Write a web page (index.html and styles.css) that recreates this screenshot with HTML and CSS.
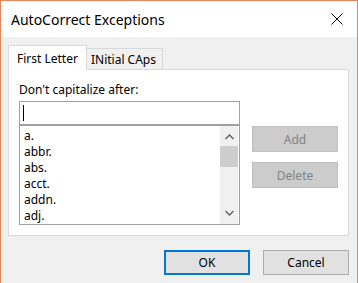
FILE: index.html
```html
<!DOCTYPE html>
<html lang="en">
<head>
  <meta charset="UTF-8" />
  <title>AutoCorrect Exceptions</title>
  <link rel="stylesheet" href="styles.css">
</head>
<body>
  <div class="window">
    <div class="titlebar">
      <span class="title">AutoCorrect Exceptions</span>
      <svg class="close" width="12" height="12" viewBox="0 0 12 12">
        <path d="M0.5 0.5 L11.5 11.5 M11.5 0.5 L0.5 11.5" stroke="#000" stroke-width="1" fill="none"/>
      </svg>
    </div>

    <div class="client">
      <div class="tabs">
        <div class="tab active">First Letter</div>
        <div class="tab">INitial CAps</div>
      </div>

      <div class="panel">
        <div class="label">Don't capitalize after:</div>
        <div class="row">
          <div class="fields">
            <div class="input"><span class="caret"></span></div>
            <div class="list">
              <ul class="items">
                <li>a.</li>
                <li>abbr.</li>
                <li>abs.</li>
                <li>acct.</li>
                <li>addn.</li>
                <li>adj.</li>
              </ul>
              <div class="scrollbar">
                <svg class="arrow" width="9" height="6" viewBox="0 0 9 6">
                  <path d="M0.5 5 L4.5 1 L8.5 5" stroke="#606060" stroke-width="1.4" fill="none"/>
                </svg>
                <div class="thumb"></div>
                <div class="track"></div>
                <svg class="arrow" width="9" height="6" viewBox="0 0 9 6">
                  <path d="M0.5 1 L4.5 5 L8.5 1" stroke="#606060" stroke-width="1.4" fill="none"/>
                </svg>
              </div>
            </div>
          </div>
          <div class="side-buttons">
            <button class="btn" disabled>Add</button>
            <button class="btn" disabled>Delete</button>
          </div>
        </div>
      </div>

      <div class="footer">
        <button class="btn default">OK</button>
        <button class="btn">Cancel</button>
      </div>
    </div>
  </div>
</body>
</html>
```

FILE: styles.css
```css
* { margin: 0; padding: 0; box-sizing: border-box; }
body {
  font-family: 'Noto Sans', 'Open Sans', sans-serif;
  font-size: 12px;
  color: #000;
  background: #f0f0f0;
}

/* Window frame */
.window {
  width: 358px;
  height: 283px;
  border: 1px solid #e8845a;
  border-bottom: none;
  display: flex;
  flex-direction: column;
  background: #f0f0f0;
}
.titlebar {
  height: 36px;
  background: #fff;
  display: flex;
  align-items: center;
  justify-content: space-between;
  padding: 0 14px 0 10px;
}
.title { font-size: 14px; }
.close { display: block; }

/* Client area */
.client {
  flex: 1;
  padding: 8px 8px 0 7px;
}

/* Tabs */
.tabs {
  display: flex;
  align-items: flex-end;
  height: 24px;
}
.tab {
  height: 21px;
  padding: 0 6px 0 4px;
  border: 1px solid #d9d9d9;
  border-bottom: none;
  border-left: none;
  background: #f0f0f0;
  display: flex;
  align-items: center;
}
.tab.active {
  height: 25px;
  margin-bottom: -1px;
  padding: 0 8px;
  border-left: 1px solid #d9d9d9;
  background: #fff;
  position: relative;
  z-index: 1;
}

.panel {
  height: 167px;
  width: 341px;
  border: 1px solid #d9d9d9;
  background: #fff;
  padding: 12px 10px 0 10px;
}
.label { line-height: 16px; margin-bottom: 3px; }
.row { display: flex; gap: 12px; }
.fields { width: 221px; }

.input {
  height: 24px;
  border: 1px solid #a0a0a0;
  padding: 3px 0 0 3px;
}
.caret {
  display: block;
  width: 1px;
  height: 16px;
  background: #000;
}

.list {
  height: 100px;
  border: 1px solid #a0a0a0;
  display: flex;
  justify-content: space-between;
}
.items {
  list-style: none;
  padding: 2px 0 0 4px;
}
.items li { line-height: 16px; }

.scrollbar {
  width: 18px;
  margin: 0 1px 0 0;
  background: #f0f0f0;
  display: flex;
  flex-direction: column;
  align-items: center;
}
.scrollbar .arrow { margin: 8px 0 6px; }
.scrollbar .arrow:last-child { margin: 6px 0 8px; }
.thumb {
  width: 100%;
  height: 21px;
  background: #cdcdcd;
}
.track { flex: 1; }

/* Buttons */
.btn {
  font-family: inherit;
  font-size: 12px;
  width: 86px;
  height: 25px;
  background: #e1e1e1;
  border: 1px solid #adadad;
  color: #000;
}
.btn:disabled {
  background: #cccccc;
  border-color: #bfbfbf;
  color: #838383;
}
.btn.default { border: 2px solid #0078d7; }

.side-buttons {
  display: flex;
  flex-direction: column;
  gap: 10px;
  padding-top: 25px;
}
.side-buttons .btn { height: 26px; }

.footer {
  display: flex;
  justify-content: flex-end;
  gap: 13px;
  margin-top: 14px;
}
```
